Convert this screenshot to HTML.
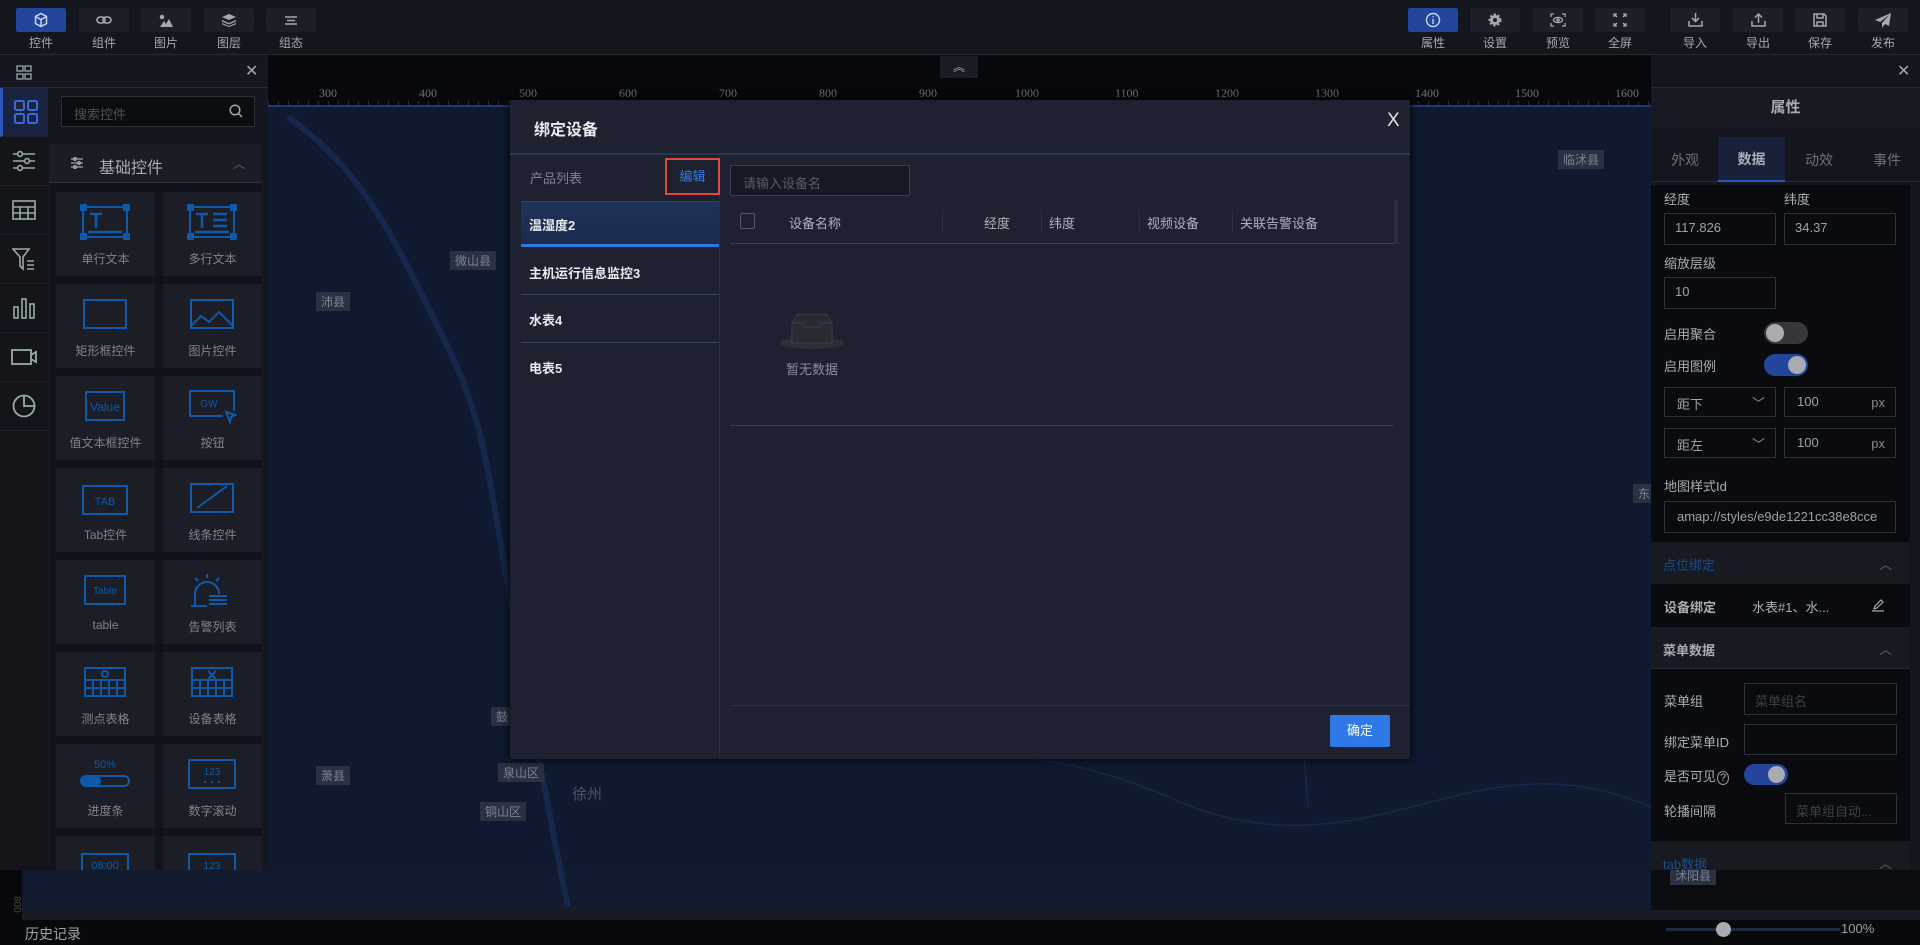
<!DOCTYPE html>
<html><head><meta charset="utf-8"><style>
*{box-sizing:border-box;margin:0;padding:0}
body{width:1920px;height:945px;overflow:hidden;background:#0b0c10;font-family:"Liberation Sans","Noto Sans CJK SC",sans-serif;color:#9a9ea8;font-size:13px;position:relative}
.a{position:absolute}
.top{left:0;top:0;width:1920px;height:55px;background:#14161d;border-bottom:1px solid #262a33}
.tb{position:absolute;top:8px;width:50px;height:24px;background:#1c1f27;border-radius:2px;display:flex;align-items:center;justify-content:center}
.tb.on{background:#23469c}
.tl{position:absolute;top:34px;width:50px;text-align:center;font-size:12px;color:#a4a8b0}
.map{left:268px;top:107px;width:1383px;height:803px;background:#0f1a30}
.ml{position:absolute;background:#2a3142;color:#7d8392;font-size:12px;padding:1px 5px}
.lp{left:0;top:55px;width:268px;height:815px;background:#15171e}
.ic{position:absolute;left:0;width:48px;height:49px;border-bottom:1px solid #1d2028;display:flex;align-items:center;justify-content:center}
.gi{position:absolute;width:99px;height:84px;background:#1b1e27;text-align:center;font-size:12px;color:#7e838d}
.gi svg{position:absolute;left:24px;top:12px}
.gi span{position:absolute;left:0;right:0;top:58px}
.rp{left:1651px;top:55px;width:269px;height:815px;background:#14161d}
.lab{position:absolute;font-size:13px;color:#a9adb5}
.inp{position:absolute;border:1px solid #2c303b;background:#0a0b0f;color:#9da1aa;font-size:13px;padding:6px 10px;height:30px}
.sec{position:absolute;left:0;width:259px;height:42px;background:#181a22;font-size:13px;padding:13px 12px}
.mod{left:510px;top:100px;width:900px;height:659px;background:#1e2230;box-shadow:0 0 10px #000}
</style></head><body>
<div class="a top">
 <div class="tb on" style="left:16px"><svg width="16" height="16" viewBox="0 0 16 16" fill="none" stroke="#c9d4f0" stroke-width="1.5"><path d="M8 1.5l5.5 3v7L8 14.5 2.5 11.5v-7z M2.5 4.5L8 7.5l5.5-3 M8 7.5v7"/></svg></div><div class="tl" style="left:16px">控件</div>
 <div class="tb" style="left:79px"><svg width="16" height="10" viewBox="0 0 16 10" fill="none" stroke="#a4a8b0" stroke-width="1.6"><rect x="1" y="2" width="8" height="6" rx="3"/><rect x="7" y="2" width="8" height="6" rx="3"/></svg></div><div class="tl" style="left:79px">组件</div>
 <div class="tb" style="left:141px"><svg width="14" height="13" viewBox="0 0 14 13" fill="#a4a8b0"><circle cx="3" cy="3" r="2.2"/><path d="M1 13l4-6 2 3 3-5 4 8z"/></svg></div><div class="tl" style="left:141px">图片</div>
 <div class="tb" style="left:204px"><svg width="14" height="13" viewBox="0 0 14 13" fill="#a4a8b0"><path d="M7 0l7 3-7 3-7-3z M0 6l7 3 7-3v1.5l-7 3-7-3z M0 9l7 3 7-3v1.2L7 13 0 10.2z"/></svg></div><div class="tl" style="left:204px">图层</div>
 <div class="tb" style="left:266px"><svg width="12" height="9" viewBox="0 0 12 9" stroke="#a4a8b0" stroke-width="1.4"><path d="M0 1h12M2 4.5h8M0 8h12"/></svg></div><div class="tl" style="left:266px">组态</div>
 <div class="tb on" style="left:1408px"><svg width="16" height="16" viewBox="0 0 16 16" fill="none" stroke="#c9d4f0" stroke-width="1.4"><circle cx="8" cy="8" r="6.5"/><path d="M8 7v5M8 4.2v1"/></svg></div><div class="tl" style="left:1408px">属性</div>
 <div class="tb" style="left:1470px"><svg width="14" height="14" viewBox="0 0 14 14"><circle cx="7" cy="7" r="5" fill="#a4a8b0" stroke="#a4a8b0" stroke-width="3" stroke-dasharray="2 1.7"/><circle cx="7" cy="7" r="2" fill="#1c1f27"/></svg></div><div class="tl" style="left:1470px">设置</div>
 <div class="tb" style="left:1533px"><svg width="16" height="14" viewBox="0 0 16 14" fill="none" stroke="#a4a8b0" stroke-width="1.3"><path d="M1 4V1h3M12 1h3v3M15 10v3h-3M4 13H1v-3"/><ellipse cx="8" cy="7" rx="4.5" ry="2.6"/><circle cx="8" cy="7" r="1.2"/></svg></div><div class="tl" style="left:1533px">预览</div>
 <div class="tb" style="left:1595px"><svg width="14" height="14" viewBox="0 0 14 14" fill="none" stroke="#a4a8b0" stroke-width="1.3"><path d="M1 4V1h3M1 1l3 3M10 1h3v3M13 1l-3 3M13 10v3h-3M13 13l-3-3M4 13H1v-3M1 13l3-3"/></svg></div><div class="tl" style="left:1595px">全屏</div>
 <div class="tb" style="left:1670px"><svg width="15" height="14" viewBox="0 0 15 14" fill="none" stroke="#a4a8b0" stroke-width="1.5"><path d="M7.5 0v8M4 5l3.5 3.5L11 5M1 8v5h13V8"/></svg></div><div class="tl" style="left:1670px">导入</div>
 <div class="tb" style="left:1733px"><svg width="15" height="14" viewBox="0 0 15 14" fill="none" stroke="#a4a8b0" stroke-width="1.5"><path d="M7.5 10V1M4 4.5L7.5 1 11 4.5M1 8v5h13V8"/></svg></div><div class="tl" style="left:1733px">导出</div>
 <div class="tb" style="left:1795px"><svg width="14" height="14" viewBox="0 0 14 14" fill="none" stroke="#a4a8b0" stroke-width="1.5"><path d="M1 1h10l2 2v10H1z M4 1v4h6V1 M4 9h6v4H4z"/></svg></div><div class="tl" style="left:1795px">保存</div>
 <div class="tb" style="left:1858px"><svg width="16" height="15" viewBox="0 0 16 15" fill="#a4a8b0"><path d="M16 0L0 7l5 2 9-7-7 8v5l3-4 4 2z"/></svg></div><div class="tl" style="left:1858px">发布</div>
</div>

<div class="a" style="left:268px;top:56px;width:1383px;height:51px;background:#07080b;border-bottom:2px solid #1e3a78"></div>
<div class="a" style="left:940px;top:56px;width:38px;height:22px;background:#1a1d25;color:#9aa;text-align:center;font-size:12px;line-height:22px">︽</div>
<div class="a" style="left:268px;top:86px;width:1383px;height:14px;font-family:'Liberation Serif',serif;font-size:12px;color:#6e727b">
<span class="a" style="left:51px">300</span><span class="a" style="left:151px">400</span><span class="a" style="left:251px">500</span><span class="a" style="left:351px">600</span><span class="a" style="left:451px">700</span><span class="a" style="left:551px">800</span><span class="a" style="left:651px">900</span><span class="a" style="left:747px">1000</span><span class="a" style="left:847px">1100</span><span class="a" style="left:947px">1200</span><span class="a" style="left:1047px">1300</span><span class="a" style="left:1147px">1400</span><span class="a" style="left:1247px">1500</span><span class="a" style="left:1347px">1600</span></div>
<div class="a" style="left:268px;top:101px;width:1383px;height:4px;background:repeating-linear-gradient(90deg,#2a2d35 0 1px,transparent 1px 10px)"></div>

<div class="a map"></div>
<div class="a" style="left:22px;top:870px;width:1629px;height:40px;background:#111a2e"></div>
<svg class="a" style="left:268px;top:107px" width="1383" height="803" fill="none" stroke="#15274a" stroke-width="1.5"><path d="M20 10 C90 60 120 120 160 200 S210 300 230 420 S260 600 300 800" stroke-width="6"/><path d="M1050 0 C1060 100 1030 200 1050 300 S1020 500 1040 700"/><path d="M330 620 C500 680 700 600 900 690 S1200 620 1383 700"/></svg>
<div class="ml" style="left:450px;top:251px">微山县</div>
<div class="ml" style="left:316px;top:292px">沛县</div>
<div class="ml" style="left:316px;top:766px">萧县</div>
<div class="ml" style="left:498px;top:763px">泉山区</div>
<div class="ml" style="left:480px;top:802px">铜山区</div>
<div class="a" style="left:572px;top:783px;color:#4d5566;font-size:15px">徐州</div>
<div class="ml" style="left:491px;top:707px">鼓</div>
<div class="ml" style="left:1558px;top:150px">临沭县</div>
<div class="ml" style="left:1633px;top:484px">东</div>
<div class="ml" style="left:1670px;top:866px">沭阳县</div>
<div class="a" style="left:0;top:870px;width:22px;height:50px;background:#07080b;color:#444;font-size:10px;writing-mode:vertical-rl;padding-top:26px">800</div>
<div class="a" style="left:22px;top:910px;width:1898px;height:10px;background:#171a22"></div>
<div class="a" style="left:0;top:920px;width:1920px;height:25px;background:#08090c"></div>
<div class="a" style="left:25px;top:924px;font-size:14px;color:#a0a3aa">历史记录</div>
<div class="a" style="left:1666px;top:928px;width:174px;height:3px;background:#1d2a40"></div>
<div class="a" style="left:1716px;top:922px;width:15px;height:15px;border-radius:50%;background:#a9abb0"></div>
<div class="a" style="left:1841px;top:921px;font-size:13px;color:#9da0a8">100%</div>

<div class="a lp">
 <div class="a" style="left:0;top:0;width:268px;height:33px;border-bottom:1px solid #262a33"></div>
 <svg class="a" style="left:16px;top:10px" width="16" height="15" fill="none" stroke="#9aa" stroke-width="1.3"><rect x="1" y="1" width="6" height="5"/><rect x="9" y="1" width="6" height="5"/><rect x="1" y="9" width="6" height="5"/><rect x="9" y="9" width="6" height="5"/></svg>
 <div class="a" style="left:245px;top:6px;font-size:16px;color:#9aa">✕</div>
 <div class="a" style="left:0;top:33px;width:48px;height:782px;background:#13151b"></div>
 <div class="ic" style="top:33px;background:#1a2440;border-left:3px solid #2d56b8"><svg width="24" height="24" fill="none" stroke="#3a6ad6" stroke-width="2"><rect x="1" y="1" width="9" height="9" rx="1.5"/><rect x="14" y="1" width="9" height="9" rx="1.5"/><rect x="1" y="14" width="9" height="9" rx="1.5"/><rect x="14" y="14" width="9" height="9" rx="1.5"/></svg></div>
 <div class="ic" style="top:82px"><svg width="22" height="22" fill="none" stroke="#9aa" stroke-width="1.6"><path d="M0 4h22M0 11h22M0 18h22"/><circle cx="7" cy="4" r="2.4" fill="#13151b"/><circle cx="14" cy="11" r="2.4" fill="#13151b"/><circle cx="7" cy="18" r="2.4" fill="#13151b"/></svg></div>
 <div class="ic" style="top:131px"><svg width="24" height="20" fill="none" stroke="#9aa" stroke-width="1.6"><rect x="1" y="1" width="22" height="18"/><path d="M1 7h22M1 13h22M8 7v12M16 7v12"/></svg></div>
 <div class="ic" style="top:180px"><svg width="24" height="24" fill="none" stroke="#9aa" stroke-width="1.6"><path d="M1 2h16l-6 8v12l-3-3v-9z M15 14h7M15 18h7M15 22h7"/></svg></div>
 <div class="ic" style="top:229px"><svg width="22" height="22" fill="none" stroke="#9aa" stroke-width="1.6"><rect x="1" y="10" width="4" height="11"/><rect x="9" y="2" width="4" height="19"/><rect x="17" y="7" width="4" height="14"/></svg></div>
 <div class="ic" style="top:278px"><svg width="26" height="18" fill="none" stroke="#9aa" stroke-width="1.8"><rect x="1" y="2" width="19" height="14"/><path d="M20 7l5-3v10l-5-3"/></svg></div>
 <div class="ic" style="top:327px"><svg width="24" height="24" fill="none" stroke="#9aa" stroke-width="1.8"><circle cx="12" cy="12" r="10.5"/><path d="M12 1.5V12h10.5"/></svg></div>
 <div class="a" style="left:61px;top:41px;width:194px;height:31px;border:1px solid #2c303b;background:#0c0d11;color:#4a4e57;padding:7px 12px;font-size:13px">搜索控件</div>
 <svg class="a" style="left:229px;top:49px" width="14" height="14" fill="none" stroke="#9aa" stroke-width="1.5"><circle cx="6" cy="6" r="4.8"/><path d="M9.5 9.5L13 13"/></svg>
 <div class="a" style="left:49px;top:89px;width:212px;height:39px;background:#1a1d25;border-bottom:1px solid #2d3240"></div>
 <svg class="a" style="left:71px;top:102px" width="12" height="12" fill="none" stroke="#9aa" stroke-width="1.2"><path d="M0 2h12M0 6h12M0 10h12"/><circle cx="4" cy="2" r="1.5"/><circle cx="8" cy="6" r="1.5"/><circle cx="4" cy="10" r="1.5"/></svg>
 <div class="a" style="left:99px;top:99px;font-size:16px;color:#a8acb4">基础控件</div>
 <div class="a" style="left:233px;top:100px;color:#666;font-size:12px">︿</div>
 <div class="a" style="left:49px;top:128px;width:212px;height:687px;background:#111318"></div>
</div>
<div class="a" style="left:0;top:0">
 <div class="gi" style="left:56px;top:192px"><svg width="50" height="36" fill="none" stroke="#0e5aa8" stroke-width="2"><rect x="3" y="3" width="44" height="30"/><path d="M8 28h34M10 10h12M16 10v14" stroke-width="2.5"/><g fill="#0e5aa8"><rect x="0" y="0" width="6" height="6"/><rect x="44" y="0" width="6" height="6"/><rect x="0" y="30" width="6" height="6"/><rect x="44" y="30" width="6" height="6"/></g></svg><span>单行文本</span></div>
 <div class="gi" style="left:163px;top:192px"><svg width="50" height="36" fill="none" stroke="#0e5aa8" stroke-width="2"><rect x="3" y="3" width="44" height="30"/><path d="M8 28h34M9 10h12M15 10v14M26 10h14M26 16h14M26 22h14" stroke-width="2.5"/><g fill="#0e5aa8"><rect x="0" y="0" width="6" height="6"/><rect x="44" y="0" width="6" height="6"/><rect x="0" y="30" width="6" height="6"/><rect x="44" y="30" width="6" height="6"/></g></svg><span>多行文本</span></div>
 <div class="gi" style="left:56px;top:284px"><svg width="50" height="36" fill="none" stroke="#0e5aa8" stroke-width="2"><rect x="4" y="4" width="42" height="28"/></svg><span>矩形框控件</span></div>
 <div class="gi" style="left:163px;top:284px"><svg width="50" height="36" fill="none" stroke="#0e5aa8" stroke-width="2"><rect x="4" y="4" width="42" height="28"/><path d="M4 30l10-10 8 6 10-10 14 14"/></svg><span>图片控件</span></div>
 <div class="gi" style="left:56px;top:376px"><svg width="50" height="36" fill="none" stroke="#0e5aa8" stroke-width="2"><rect x="6" y="4" width="38" height="28"/><text x="25" y="23" fill="#0e5aa8" stroke="none" font-size="12" text-anchor="middle" font-family="Liberation Sans">Value</text></svg><span>值文本框控件</span></div>
 <div class="gi" style="left:163px;top:376px"><svg width="50" height="36" fill="none" stroke="#0e5aa8" stroke-width="2"><path d="M36 28H3V3h44v20"/><text x="22" y="19" fill="#0e5aa8" stroke="none" font-size="10" text-anchor="middle" font-family="Liberation Sans">GW</text><path d="M39 24l9 3-4 2-1 5z"/></svg><span>按钮</span></div>
 <div class="gi" style="left:56px;top:468px"><svg width="50" height="36" fill="none" stroke="#0e5aa8" stroke-width="2"><rect x="3" y="6" width="44" height="28"/><text x="25" y="25" fill="#0e5aa8" stroke="none" font-size="11" text-anchor="middle" font-family="Liberation Sans">TAB</text></svg><span>Tab控件</span></div>
 <div class="gi" style="left:163px;top:468px"><svg width="50" height="36" fill="none" stroke="#0e5aa8" stroke-width="2"><rect x="4" y="4" width="42" height="28"/><path d="M10 28l30-22"/></svg><span>线条控件</span></div>
 <div class="gi" style="left:56px;top:560px"><svg width="50" height="36" fill="none" stroke="#0e5aa8" stroke-width="2"><rect x="5" y="4" width="40" height="28"/><text x="25" y="22" fill="#0e5aa8" stroke="none" font-size="10" text-anchor="middle" font-family="Liberation Sans">Table</text></svg><span>table</span></div>
 <div class="gi" style="left:163px;top:560px"><svg width="50" height="36" fill="none" stroke="#0e5aa8" stroke-width="2"><path d="M8 34V22a12 12 0 0 1 24 0M20 2v4M8 6l3 3M32 6l-3 3M22 24h18M22 28h18M22 32h18M4 34h16"/></svg><span>告警列表</span></div>
 <div class="gi" style="left:56px;top:652px"><svg width="50" height="36" fill="none" stroke="#0e5aa8" stroke-width="2"><rect x="5" y="4" width="40" height="28"/><path d="M5 16h40M5 24h40M13 16v16M21 16v16M29 16v16M37 16v16"/><circle cx="25" cy="10" r="3"/></svg><span>测点表格</span></div>
 <div class="gi" style="left:163px;top:652px"><svg width="50" height="36" fill="none" stroke="#0e5aa8" stroke-width="2"><rect x="5" y="4" width="40" height="28"/><path d="M5 16h40M5 24h40M13 16v16M21 16v16M29 16v16M37 16v16M21 7l8 8M29 7l-8 8"/></svg><span>设备表格</span></div>
 <div class="gi" style="left:56px;top:744px"><svg width="50" height="36" fill="none" stroke="#0e5aa8" stroke-width="2"><text x="25" y="12" fill="#0e5aa8" stroke="none" font-size="11" text-anchor="middle" font-family="Liberation Sans">50%</text><rect x="1" y="20" width="48" height="10" rx="5"/><rect x="2" y="21" width="18" height="8" rx="4" fill="#0e5aa8"/></svg><span>进度条</span></div>
 <div class="gi" style="left:163px;top:744px"><svg width="50" height="36" fill="none" stroke="#0e5aa8" stroke-width="2"><rect x="2" y="4" width="46" height="28"/><text x="25" y="19" fill="#0e5aa8" stroke="none" font-size="10" text-anchor="middle" font-family="Liberation Sans">123</text><path d="M17 26h2M24 26h2M31 26h2"/></svg><span>数字滚动</span></div>
 <div class="gi" style="left:56px;top:836px;height:34px"><svg width="50" height="22" fill="none" stroke="#0e5aa8" stroke-width="2"><rect x="2" y="6" width="46" height="20"/><text x="25" y="21" fill="#0e5aa8" stroke="none" font-size="11" text-anchor="middle" font-family="Liberation Sans">08:00</text></svg></div>
 <div class="gi" style="left:163px;top:836px;height:34px"><svg width="50" height="22" fill="none" stroke="#0e5aa8" stroke-width="2"><rect x="2" y="6" width="46" height="20"/><text x="25" y="21" fill="#0e5aa8" stroke="none" font-size="10" text-anchor="middle" font-family="Liberation Sans">123</text></svg></div>
</div>

<div class="a rp">
 <div class="a" style="left:0;top:0;width:269px;height:33px;border-bottom:1px solid #262a33"></div>
 <div class="a" style="left:246px;top:6px;font-size:16px;color:#9aa">✕</div>
 <div class="a" style="left:0;top:33px;width:269px;height:40px;background:#171a22;text-align:center;font-size:15px;line-height:40px;color:#a8acb4;font-weight:bold">属性</div>
 <div class="a" style="left:0;top:82px;width:269px;height:45px;font-size:14px;color:#6c707a;border-bottom:1px solid #262a33">
  <span class="a" style="left:20px;top:13px">外观</span>
  <div class="a" style="left:67px;top:0;width:67px;height:45px;background:#17223a;border-bottom:2px solid #2d56b8;color:#a9adb5;text-align:center;line-height:44px;font-weight:bold">数据</div>
  <span class="a" style="left:154px;top:13px">动效</span><span class="a" style="left:222px;top:13px">事件</span>
 </div>
 <div class="a" style="left:0;top:130px;width:259px;height:685px;background:#0a0b0f"></div>
 <div class="lab" style="left:13px;top:134px">经度</div><div class="lab" style="left:133px;top:134px">纬度</div>
 <div class="inp" style="left:13px;top:158px;width:112px;height:32px">117.826</div>
 <div class="inp" style="left:133px;top:158px;width:112px;height:32px">34.37</div>
 <div class="lab" style="left:13px;top:198px">缩放层级</div>
 <div class="inp" style="left:13px;top:222px;width:112px;height:32px">10</div>
 <div class="lab" style="left:13px;top:269px">启用聚合</div>
 <div class="a" style="left:113px;top:267px;width:44px;height:22px;border-radius:11px;background:#35373c"><div class="a" style="left:2px;top:2px;width:18px;height:18px;border-radius:50%;background:#a9abb0"></div></div>
 <div class="lab" style="left:13px;top:301px">启用图例</div>
 <div class="a" style="left:113px;top:299px;width:44px;height:22px;border-radius:11px;background:#23469c"><div class="a" style="left:24px;top:2px;width:18px;height:18px;border-radius:50%;background:#a9abb0"></div></div>
 <div class="inp" style="left:13px;top:332px;width:112px;height:30px;padding:6px 12px">距下<span class="a" style="right:10px;top:5px;color:#888">﹀</span></div>
 <div class="inp" style="left:133px;top:332px;width:112px;height:30px;padding:6px 12px">100<span class="a" style="right:10px;top:7px;color:#888">px</span></div>
 <div class="inp" style="left:13px;top:373px;width:112px;height:30px;padding:6px 12px">距左<span class="a" style="right:10px;top:5px;color:#888">﹀</span></div>
 <div class="inp" style="left:133px;top:373px;width:112px;height:30px;padding:6px 12px">100<span class="a" style="right:10px;top:7px;color:#888">px</span></div>
 <div class="lab" style="left:13px;top:421px">地图样式Id</div>
 <div class="inp" style="left:13px;top:446px;width:232px;height:32px;padding:7px 12px;white-space:nowrap;overflow:hidden">amap://styles/e9de1221cc38e8cce</div>
 <div class="sec" style="top:487px;color:#1b4d8a">点位绑定<span class="a" style="right:18px;top:12px;color:#666">︿</span></div>
 <div class="lab" style="left:13px;top:542px;font-weight:bold">设备绑定</div>
 <div class="lab" style="left:101px;top:542px">水表#1、水...</div>
 <svg class="a" style="left:220px;top:543px" width="14" height="14" fill="none" stroke="#9aa" stroke-width="1.2"><path d="M1 13h12M3 11l1-3 6-6 2 2-6 6z"/></svg>
 <div class="sec" style="top:572px;color:#a9adb5;font-weight:bold;border-bottom:1px solid #262a33">菜单数据<span class="a" style="right:18px;top:12px;color:#666;font-weight:normal">︿</span></div>
 <div class="lab" style="left:13px;top:636px">菜单组</div>
 <div class="inp" style="left:93px;top:628px;width:153px;height:32px;color:#3c4049;padding:7px 10px">菜单组名</div>
 <div class="lab" style="left:13px;top:677px">绑定菜单ID</div>
 <div class="inp" style="left:93px;top:669px;width:153px;height:31px"></div>
 <div class="lab" style="left:13px;top:711px">是否可见<span style="font-size:11px;border:1px solid #999;border-radius:50%;padding:0 2px;margin-left:1px">?</span></div>
 <div class="a" style="left:93px;top:709px;width:44px;height:21px;border-radius:11px;background:#23469c"><div class="a" style="left:24px;top:2px;width:17px;height:17px;border-radius:50%;background:#a9abb0"></div></div>
 <div class="lab" style="left:13px;top:746px">轮播间隔</div>
 <div class="inp" style="left:134px;top:738px;width:112px;height:31px;color:#3c4049;padding:7px 10px">菜单组自动...</div>
 <div class="sec" style="top:786px;color:#1b4d8a;height:29px">tab数据<span class="a" style="right:18px;top:12px;color:#666">︿</span></div>
</div>

<div class="a mod">
 <div class="a" style="left:24px;top:16px;font-size:16px;color:#e8eaef;font-weight:bold">绑定设备</div>
 <div class="a" style="left:877px;top:10px;font-size:19px;color:#e0e2e6">X</div>
 <div class="a" style="left:0;top:53px;width:900px;height:2px;background:#2d3850"></div>
 <div class="a" style="left:209px;top:55px;width:1px;height:604px;background:#2a2e3a"></div>
 <div class="a" style="left:20px;top:68px;color:#7d8290">产品列表</div>
 <div class="a" style="left:155px;top:58px;width:55px;height:37px;border:2px solid #e04b3e;color:#2f79e6;text-align:center;line-height:33px">编辑</div>
 <div class="a" style="left:11px;top:101px;width:198px;height:1px;background:#3a4257"></div>
 <div class="a" style="left:11px;top:102px;width:198px;height:45px;background:linear-gradient(#1f3257,#1a2b4f);border-bottom:3px solid #2f79e6;color:#e8eaef;font-size:13px;padding:13px 8px;font-weight:bold">温湿度2</div>
 <div class="a" style="left:11px;top:148px;width:198px;height:47px;border-bottom:1px solid #3a4257;color:#e8eaef;padding:15px 8px;font-weight:bold">主机运行信息监控3</div>
 <div class="a" style="left:11px;top:195px;width:198px;height:48px;border-bottom:1px solid #3a4257;color:#e8eaef;padding:15px 8px;font-weight:bold">水表4</div>
 <div class="a" style="left:11px;top:243px;width:198px;height:46px;color:#e8eaef;padding:15px 8px;font-weight:bold">电表5</div>
 <div class="a" style="left:220px;top:65px;width:180px;height:31px;border:1px solid #3a4050;background:#161a24;color:#565b67;padding:7px 12px">请输入设备名</div>
 <div class="a" style="left:220px;top:98px;width:664px;height:46px;border-bottom:1px solid #3a4257"></div>
 <div class="a" style="left:884px;top:100px;width:4px;height:44px;background:#2a2e3a"></div>
 <div class="a" style="left:230px;top:113px;width:15px;height:16px;border:1px solid #545a68;border-radius:2px"></div>
 <div class="a" style="left:279px;top:113px;color:#aeb2ba">设备名称</div>
 <div class="a" style="left:432px;top:110px;width:1px;height:22px;background:#2c3140"></div>
 <div class="a" style="left:474px;top:113px;color:#aeb2ba">经度</div>
 <div class="a" style="left:531px;top:110px;width:1px;height:22px;background:#2c3140"></div>
 <div class="a" style="left:539px;top:113px;color:#aeb2ba">纬度</div>
 <div class="a" style="left:629px;top:110px;width:1px;height:22px;background:#2c3140"></div>
 <div class="a" style="left:637px;top:113px;color:#aeb2ba">视频设备</div>
 <div class="a" style="left:722px;top:110px;width:1px;height:22px;background:#2c3140"></div>
 <div class="a" style="left:730px;top:113px;color:#aeb2ba">关联告警设备</div>
 <svg class="a" style="left:270px;top:208px" width="64" height="42"><ellipse cx="32" cy="35" rx="32" ry="6" fill="#2b2f38"/><path d="M18 6h28l6 9v20H12V15z" fill="#262a31" stroke="#3a3e47"/><path d="M12 15h12v4h16v-4h12" fill="none" stroke="#3a3e47"/></svg>
 <div class="a" style="left:276px;top:259px;color:#8a8f99">暂无数据</div>
 <div class="a" style="left:220px;top:325px;width:664px;height:1px;background:#3a4257"></div>
 <div class="a" style="left:220px;top:605px;width:680px;height:1px;background:#2e3342"></div>
 <div class="a" style="left:820px;top:615px;width:60px;height:32px;background:#2f79e6;color:#fff;text-align:center;line-height:32px;border-radius:2px">确定</div>
</div>
</body></html>
